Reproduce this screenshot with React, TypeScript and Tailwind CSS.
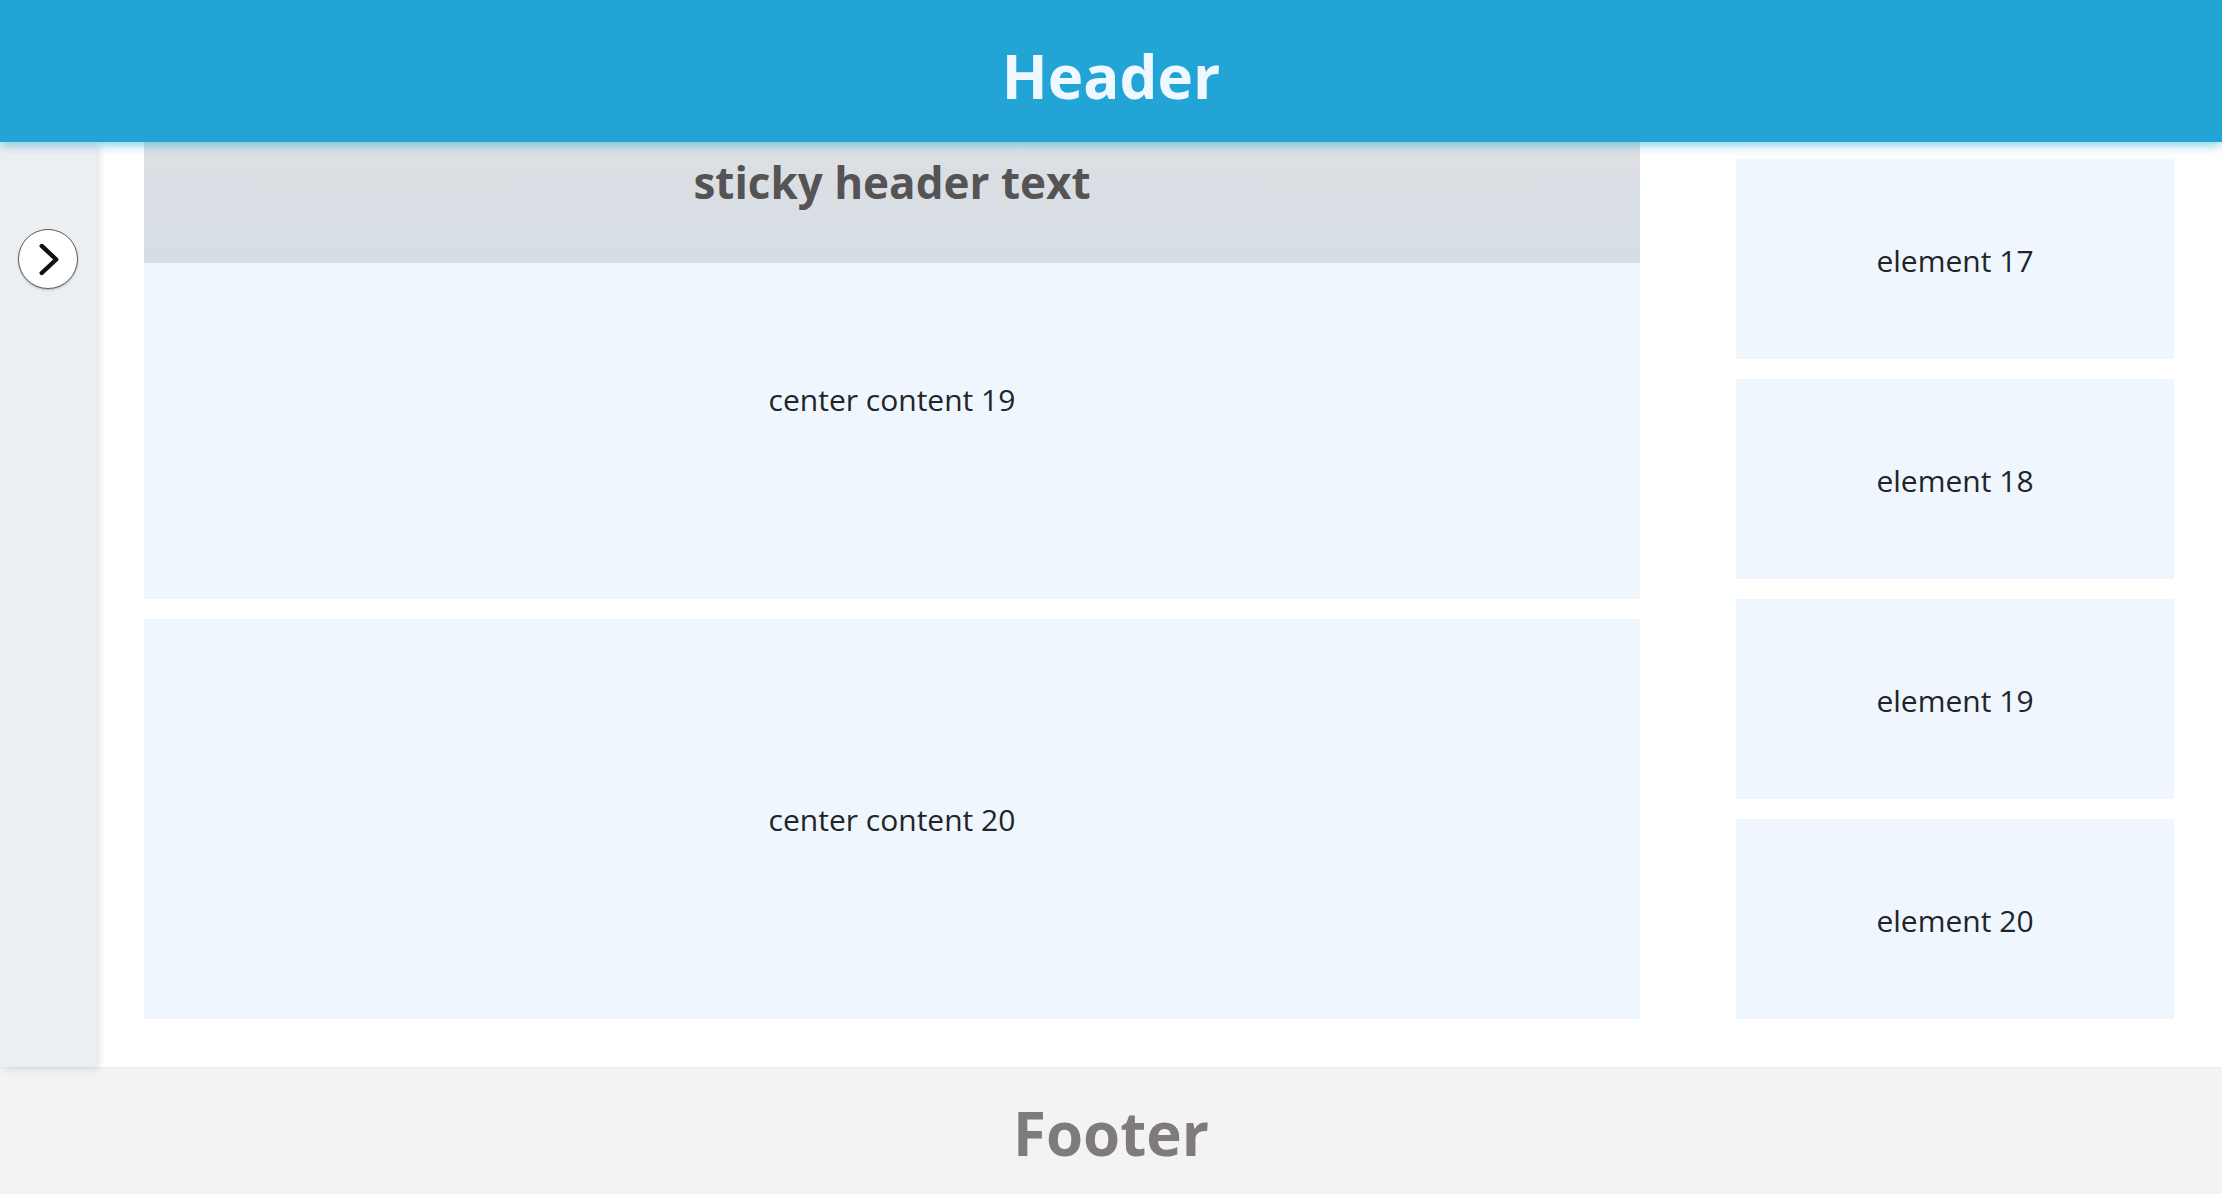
import React from "react";

const FONT = "font-['Open_Sans','Noto_Sans',sans-serif]";

function ChevronButton() {
  return (
    <button
      type="button"
      className="w-[60px] h-[60px] rounded-full bg-white border border-[#5f5f5f] flex items-center justify-center shadow-[0_1px_2px_rgba(0,0,0,0.25)]"
    >
      <svg width="60" height="60" viewBox="0 0 60 60" fill="none">
        <path
          d="M23.5 16.5 L38.5 30.5 L23.5 44.5"
          stroke="#111"
          strokeWidth="4.5"
          strokeLinecap="round"
          strokeLinejoin="round"
        />
      </svg>
    </button>
  );
}

const SIDE_ITEMS = ["element 17", "element 18", "element 19", "element 20"];

export default function App() {
  return (
    <div className={`h-screen flex flex-col bg-white ${FONT}`}>
      <header className="relative z-20 h-[142px] shrink-0 bg-[#22a5d6] flex items-center justify-center pt-[10px] shadow-[0_3px_10px_rgba(34,165,214,0.55)]">
        <h1 className="text-[60px] font-bold text-[#f0f8ff] leading-none">Header</h1>
      </header>

      <div className="flex-1 flex min-h-0">
        <aside className="relative z-10 w-[96px] shrink-0 bg-[#eceff2] flex justify-center pt-[87px] shadow-[3px_2px_8px_rgba(0,0,0,0.12)]">
          <div>
            <ChevronButton />
          </div>
        </aside>

        <main className="flex-1 flex gap-[96px] pl-[48px] pr-[48px] overflow-hidden">
          <section className="flex-1 flex flex-col">
            <div className="relative z-10 h-[121px] shrink-0 bg-gradient-to-b from-[#dde0e4] to-[#d6dde5] flex justify-center pt-[14px]">
              <h2 className="text-[44px] font-bold text-[#555353] leading-[1.2]">sticky header text</h2>
            </div>
            <div className="-mt-[64px] flex flex-col gap-[20px]">
              <div className="h-[400px] bg-[#eff6fd] flex items-center justify-center pt-[1px] text-[30px] text-[#212529]">
                center content 19
              </div>
              <div className="h-[400px] bg-[#eff6fd] flex items-center justify-center pt-[1px] text-[30px] text-[#212529]">
                center content 20
              </div>
            </div>
          </section>

          <section className="w-[438px] shrink-0 flex flex-col gap-[20px] pt-[17px]">
            {SIDE_ITEMS.map((label) => (
              <div
                key={label}
                className="h-[200px] bg-[#eff6fd] flex items-center justify-center pt-[3px] text-[30px] text-[#212529]"
              >
                {label}
              </div>
            ))}
          </section>
        </main>
      </div>

      <footer className="h-[127px] shrink-0 bg-[#f3f3f3] flex items-center justify-center pt-[4px] border-t border-[#ededed]">
        <span className="text-[60px] font-bold text-[#7f7b7b] leading-none">Footer</span>
      </footer>
    </div>
  );
}
